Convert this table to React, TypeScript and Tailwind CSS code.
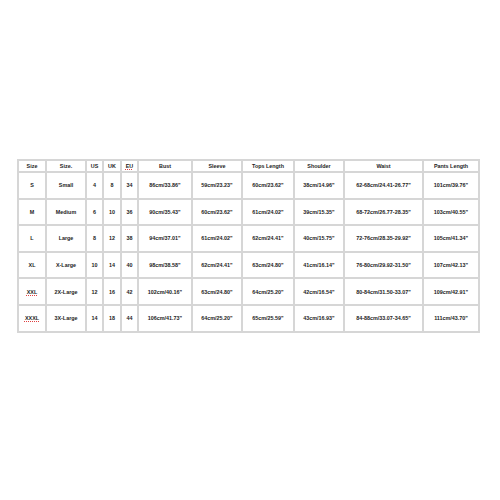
const HEAD = ["Size", "Size.", "US", "UK", "EU", "Bust", "Sleeve", "Tops Length", "Shoulder", "Waist", "Pants Length"];

const ROWS = [
  ["S", "Small", "4", "8", "34", "86cm/33.86\"", "59cm/23.23\"", "60cm/23.62\"", "38cm/14.96\"", "62-68cm/24.41-26.77\"", "101cm/39.76\""],
  ["M", "Medium", "6", "10", "36", "90cm/35.43\"", "60cm/23.62\"", "61cm/24.02\"", "39cm/15.35\"", "68-72cm/26.77-28.35\"", "103cm/40.55\""],
  ["L", "Large", "8", "12", "38", "94cm/37.01\"", "61cm/24.02\"", "62cm/24.41\"", "40cm/15.75\"", "72-76cm/28.35-29.92\"", "105cm/41.34\""],
  ["XL", "X-Large", "10", "14", "40", "98cm/38.58\"", "62cm/24.41\"", "63cm/24.80\"", "41cm/16.14\"", "76-80cm/29.92-31.50\"", "107cm/42.13\""],
  ["XXL", "2X-Large", "12", "16", "42", "102cm/40.16\"", "63cm/24.80\"", "64cm/25.20\"", "42cm/16.54\"", "80-84cm/31.50-33.07\"", "109cm/42.91\""],
  ["XXXL", "3X-Large", "14", "18", "44", "106cm/41.73\"", "64cm/25.20\"", "65cm/25.59\"", "43cm/16.93\"", "84-88cm/33.07-34.65\"", "111cm/43.70\""],
];

// words the original editor flagged with a red squiggle
const FLAGGED = ["EU", "XXL", "XXXL"];

function Cell({ text }: { text: string }) {
  const flagged = FLAGGED.includes(text);
  return (
    <div className="bg-white flex items-center justify-center whitespace-nowrap">
      <span className={flagged ? "underline decoration-dotted decoration-[#e04040] underline-offset-1" : ""}>
        {text}
      </span>
    </div>
  );
}

export default function App() {
  return (
    <div className="w-[500px] h-[500px] bg-white pt-[159px] pl-[17px] font-['Liberation_Sans',Arial,sans-serif] font-bold text-[5.4px] text-[#1c1c1c]">
      <div className="inline-grid grid-cols-[26px_38px_15px_16px_15px_52px_48px_50px_48px_77px_54px] grid-rows-[10px_repeat(6,24.6px)] gap-[2px] p-[2px] bg-[#d6d6d6]">
        {HEAD.map((h) => (
          <Cell key={h} text={h} />
        ))}
        {ROWS.map((row) =>
          row.map((c, i) => <Cell key={row[0] + i} text={c} />)
        )}
      </div>
    </div>
  );
}
